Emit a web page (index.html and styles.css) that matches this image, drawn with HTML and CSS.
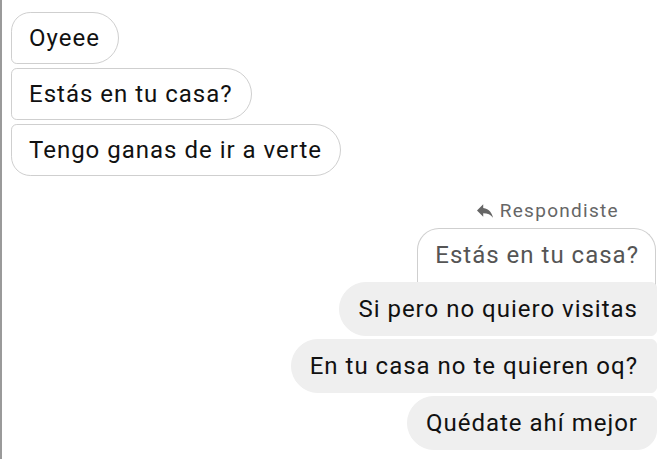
FILE: index.html
```html
<!DOCTYPE html>
<html lang="es">
<head>
  <meta charset="UTF-8">
  <meta name="viewport" content="width=device-width, initial-scale=1.0">
  <title>Chat</title>
  <link rel="stylesheet" href="styles.css">
</head>
<body>

<div class="chat">
  <!-- Received messages -->
  <div class="group received">
    <div class="bubble first">Oyeee</div>
    <div class="bubble">Estás en tu casa?</div>
    <div class="bubble last">Tengo ganas de ir a verte</div>
  </div>

  <!-- Sent messages -->
  <div class="group sent">
    <div class="reply-label">
      <svg class="reply-icon" viewBox="3 5 18 15" width="16" height="14">
        <path d="M10 9V5l-7 7 7 7v-4.1c5 0 8.5 1.6 11 5.1-1-5-4-10-11-11z" fill="#666"/>
      </svg>
      Respondiste
    </div>
    <div class="quoted">Estás en tu casa?</div>
    <div class="bubble first">Si pero no quiero visitas</div>
    <div class="bubble">En tu casa no te quieren oq?</div>
    <div class="bubble last">Quédate ahí mejor</div>
  </div>
</div>

</body>
</html>
```

FILE: styles.css
```css
body {
  font-family: Roboto, 'Noto Sans', sans-serif;
  margin: 0;
  padding: 0;
  background-color: white;
  color: #111;
}

.chat {
  border-left: 2px solid #9a9a9a;
  min-height: 459px;
  box-sizing: border-box;
  padding: 12px 11px 0 9px;
}

.group {
  display: flex;
  flex-direction: column;
  gap: 4px;
}

.received {
  align-items: flex-start;
}

.sent {
  align-items: flex-end;
}

.bubble {
  font-size: 24px;
  line-height: 28px;
  letter-spacing: 1px;
  padding: 11px 18px 11px 17px;
  position: relative;
}

.received .bubble {
  background-color: white;
  border: 1px solid #cfcfcf;
  border-radius: 6px 27px 27px 6px;
}

.received .bubble.first {
  border-top-left-radius: 20px;
}

.received .bubble.last {
  border-bottom-left-radius: 20px;
}

.sent .bubble {
  background-color: #efefef;
  border-radius: 27px 6px 6px 27px;
  padding: 12px 18px 12px 18px;
  border: 1px solid #efefef;
  margin-bottom: -1px;
}

.sent .bubble.last {
  border-bottom-right-radius: 20px;
}

.reply-label {
  display: flex;
  align-items: center;
  gap: 7px;
  font-size: 19px;
  line-height: 22px;
  letter-spacing: 1.3px;
  color: #666;
  margin: 24px 38px 2px 0;
}

.quoted {
  font-size: 24px;
  line-height: 28px;
  letter-spacing: 1px;
  color: #555;
  background-color: white;
  border: 1px solid #cfcfcf;
  border-bottom: none;
  border-radius: 22px 22px 0 0;
  padding: 12px 16px 24px 17px;
  margin-bottom: -15px;
  margin-right: 1px;
}
```
